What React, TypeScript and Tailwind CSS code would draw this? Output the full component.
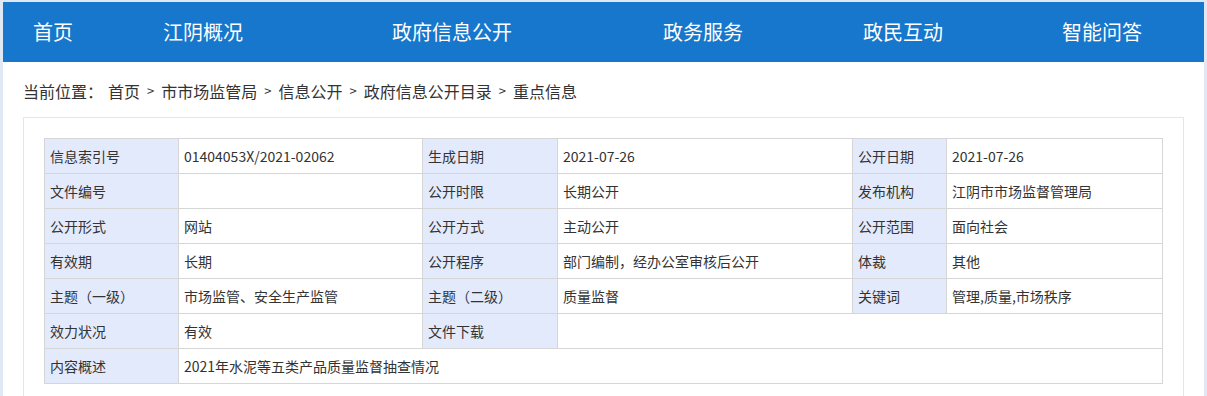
const navItems = [
  { label: '首页', cls: 'pl-[30px] w-[160px]' },
  { label: '江阴概况', cls: 'w-[229px]' },
  { label: '政府信息公开', cls: 'w-[271px]' },
  { label: '政务服务', cls: 'w-[200px]' },
  { label: '政民互动', cls: 'w-[199px]' },
  { label: '智能问答', cls: '' },
]

const crumbs = ['首页', '市市场监管局', '信息公开', '政府信息公开目录', '重点信息']

const rows: string[][] = [
  ['信息索引号', '01404053X/2021-02062', '生成日期', '2021-07-26', '公开日期', '2021-07-26'],
  ['文件编号', '', '公开时限', '长期公开', '发布机构', '江阴市市场监督管理局'],
  ['公开形式', '网站', '公开方式', '主动公开', '公开范围', '面向社会'],
  ['有效期', '长期', '公开程序', '部门编制，经办公室审核后公开', '体裁', '其他'],
  ['主题（一级）', '市场监管、安全生产监管', '主题（二级）', '质量监督', '关键词', '管理,质量,市场秩序'],
]

const th = 'h-[35px] border border-[#d6d6d6] bg-[#e3eafb] pl-[5px] text-left font-normal'
const td = 'h-[35px] border border-[#d6d6d6] bg-white pl-[5px] text-left'

export default function App() {
  return (
    <div
      className="min-h-screen bg-[#dfe9f6] px-[3px] pt-[2px]"
      style={{ fontFamily: '"Microsoft YaHei", "Noto Sans CJK SC", "Noto Sans", sans-serif' }}
    >
      <div className="bg-white min-h-[394px]">
        <nav className="flex items-center h-[60px] bg-[#1677cc] text-white text-[20px]">
          {navItems.map((n) => (
            <div key={n.label} className={n.cls}>
              {n.label}
            </div>
          ))}
        </nav>
        <div className="h-[55px] flex items-center pl-[20px] text-[16px] text-[#333] pt-[2px]">
          <span className="mr-[5px]">当前位置：</span>
          {crumbs.map((c, i) => (
            <span key={c} className="flex items-center">
              {i > 0 && <span className="mx-[7px] text-[13px]">&gt;</span>}
              <span>{c}</span>
            </span>
          ))}
        </div>
        <div className="mx-[20px] border border-[#e6e6e6] p-[20px] pb-[30px]">
          <table className="w-[1118px] border-collapse text-[14px] text-[#333] table-fixed">
            <colgroup>
              <col className="w-[134px]" />
              <col className="w-[244px]" />
              <col className="w-[135px]" />
              <col className="w-[295px]" />
              <col className="w-[94px]" />
              <col className="w-[216px]" />
            </colgroup>
            <tbody>
              {rows.map((r) => (
                <tr key={r[0]}>
                  <th className={th}>{r[0]}</th>
                  <td className={td}>{r[1]}</td>
                  <th className={th}>{r[2]}</th>
                  <td className={td}>{r[3]}</td>
                  <th className={th}>{r[4]}</th>
                  <td className={td}>{r[5]}</td>
                </tr>
              ))}
              <tr>
                <th className={th}>效力状况</th>
                <td className={td}>有效</td>
                <th className={th}>文件下载</th>
                <td className={td} colSpan={3}></td>
              </tr>
              <tr>
                <th className={th}>内容概述</th>
                <td className={td} colSpan={5}>2021年水泥等五类产品质量监督抽查情况</td>
              </tr>
            </tbody>
          </table>
        </div>
      </div>
    </div>
  )
}
